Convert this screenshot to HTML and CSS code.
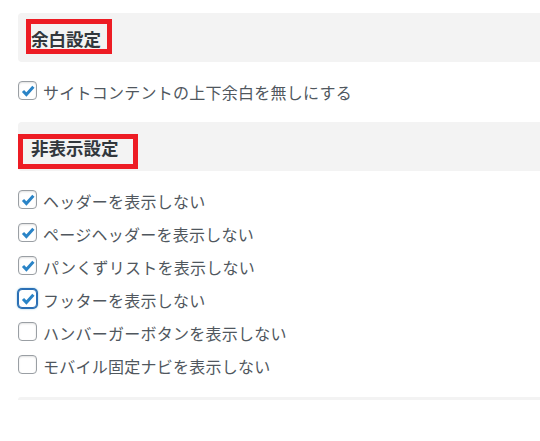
FILE: index.html
```html
<!DOCTYPE html>
<html lang="ja">
<head>
<meta charset="utf-8">
<link rel="stylesheet" href="styles.css">
</head>
<body>
<div class="wrap">
  <div class="panel">
    <h3 class="heading">余白設定</h3>
    <span class="mark mark-1"></span>
  </div>
  <div class="list">
    <label class="row"><span class="cb checked"><svg viewBox="0 0 16 16"><path d="M3 8 L6.4 11.6 L13.4 3.8"/></svg></span><span class="txt">サイトコンテントの上下余白を無しにする</span></label>
  </div>

  <div class="panel">
    <h3 class="heading">非表示設定</h3>
    <span class="mark mark-2"></span>
  </div>
  <div class="list">
    <label class="row"><span class="cb checked"><svg viewBox="0 0 16 16"><path d="M3 8 L6.4 11.6 L13.4 3.8"/></svg></span><span class="txt">ヘッダーを表示しない</span></label>
    <label class="row"><span class="cb checked"><svg viewBox="0 0 16 16"><path d="M3 8 L6.4 11.6 L13.4 3.8"/></svg></span><span class="txt">ページヘッダーを表示しない</span></label>
    <label class="row"><span class="cb checked"><svg viewBox="0 0 16 16"><path d="M3 8 L6.4 11.6 L13.4 3.8"/></svg></span><span class="txt">パンくずリストを表示しない</span></label>
    <label class="row"><span class="cb checked focus"><svg viewBox="0 0 16 16"><path d="M3 8 L6.4 11.6 L13.4 3.8"/></svg></span><span class="txt">フッターを表示しない</span></label>
    <label class="row"><span class="cb"></span><span class="txt">ハンバーガーボタンを表示しない</span></label>
    <label class="row"><span class="cb"></span><span class="txt">モバイル固定ナビを表示しない</span></label>
  </div>
  <div class="rule"></div>
</div>
</body>
</html>
```
FILE: styles.css
```css
html, body {
  margin: 0;
  padding: 0;
  background: #fff;
}
body {
  font-family: "Noto Sans CJK JP", "Noto Sans", sans-serif;
  color: #3c434a;
  width: 540px;
  overflow: hidden;
}
.wrap {
  padding: 13px 0 0 18px;
}
.panel {
  position: relative;
  height: 49px;
  background: #f3f3f3;
  border-radius: 4px 0 0 4px;
  display: flex;
  align-items: center;
  padding-left: 13px;
  box-sizing: border-box;
}
.heading {
  margin: 0;
  padding-top: 2px;
  font-size: 17.5px;
  line-height: 1;
  font-weight: bold;
  color: #32373c;
}
.mark {
  position: absolute;
  border: 5px solid #ed1c24;
  box-sizing: border-box;
  height: 35px;
}
.mark-1 {
  left: 8px;
  top: 6px;
  width: 86px;
}
.mark-2 {
  left: 0;
  top: 12px;
  width: 120px;
}
.list {
  padding: 12px 0 15px;
}
.row {
  display: flex;
  align-items: center;
  height: 33px;
  gap: 6px;
}
.cb {
  width: 19px;
  height: 19px;
  box-sizing: border-box;
  border: 1px solid #9a9fa4;
  border-radius: 4px;
  background: #fff;
  box-shadow: inset 0 1px 2px rgba(0, 0, 0, 0.12);
  display: flex;
  align-items: center;
  justify-content: center;
  flex: none;
}
.cb svg {
  width: 16px;
  height: 16px;
}
.cb svg path {
  fill: none;
  stroke: #2a84c7;
  stroke-width: 3;
  stroke-linecap: butt;
  stroke-linejoin: miter;
}
.cb.focus {
  border-color: #2a6fb5;
  box-shadow: 0 0 0 1px #2a6fb5, 0 0 2px 1px rgba(30, 140, 190, 0.5);
}
.txt {
  font-size: 16px;
  line-height: 1;
  padding-top: 3px;
  letter-spacing: 0.25px;
  color: #50575e;
}
.rule {
  margin-top: 1px;
  height: 3px;
  background: #f3f3f3;
  border-radius: 3px 0 0 0;
}
```
